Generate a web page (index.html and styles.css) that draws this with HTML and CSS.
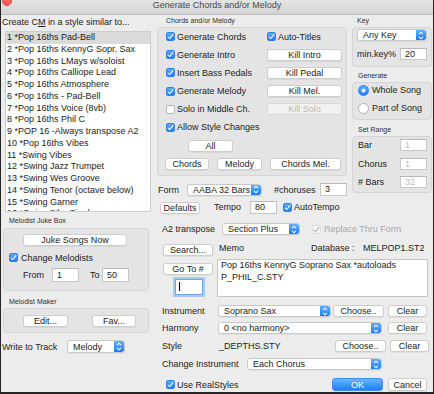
FILE: index.html
```html
<!DOCTYPE html>
<html lang="en">
<head>
    <meta charset="UTF-8">
    <title>Generate Chords and/or Melody</title>
    <link rel="stylesheet" href="styles.css">
</head>
<body>
<div class="window">
    <div class="titlebar"><span class="close"></span>Generate Chords and/or Melody</div>

    <div class="content">
        <!-- Left column: style list, juke box, maker -->
        <div class="col-left">
            <div class="caption">Create C<u>M</u> in a style similar to...</div>
            <div class="style-list">
                <div class="row sel">1 *Pop 16ths Pad-Bell</div>
                <div class="row">2 *Pop 16ths KennyG Sopr. Sax</div>
                <div class="row">3 *Pop 16ths LMays w/soloist</div>
                <div class="row">4 *Pop 16ths Calliope Lead</div>
                <div class="row">5 *Pop 16ths Atmosphere</div>
                <div class="row">6 *Pop 16ths - Pad-Bell</div>
                <div class="row">7 *Pop 16ths Voice (8vb)</div>
                <div class="row">8 *Pop 16ths Phil C</div>
                <div class="row">9 *POP 16 -Always transpose A2</div>
                <div class="row">10 *Pop 16ths Vibes</div>
                <div class="row">11 *Swing Vibes</div>
                <div class="row">12 *Swing Jazz Trumpet</div>
                <div class="row">13 *Swing Wes Groove</div>
                <div class="row">14 *Swing Tenor (octave below)</div>
                <div class="row">15 *Swing Garner</div>
                <div class="row">16 *Swing 8ths Singles</div>
            </div>

            <div class="box-label jb-label">Melodist Juke Box</div>
            <div class="box juke">
                <button class="btn juke-btn">Juke Songs Now</button>
                <div class="check change-row"><span class="cb on"></span>Change Melodists</div>
                <div class="range-row">
                    <span class="from-lbl">From</span>
                    <span class="field f27">1</span>
                    <span class="to-lbl">To</span>
                    <span class="field f27">50</span>
                </div>
            </div>

            <div class="box-label mm-label">Melodist Maker</div>
            <div class="box maker">
                <button class="btn edit-btn">Edit...</button>
                <button class="btn fav-btn">Fav...</button>
            </div>

            <div class="write-row">
                <span class="write-lbl">Write to Track</span>
                <div class="popup pop-track">
                    <span class="popup-text">Melody</span>
                    <span class="stepper"><svg width="8" height="11" viewBox="0 0 8 11"><path d="M2 4.2 L4 2.2 L6 4.2 M2 6.8 L4 8.8 L6 6.8" fill="none" stroke="#fff" stroke-width="1.1"/></svg></span>
                </div>
            </div>
        </div>

        <!-- Right side -->
        <div class="col-right">
            <div class="top">
                <div class="col-mid">
                    <div class="box-label cm-label">Chords and/or Melody</div>
                    <div class="box cm-box">
                        <div class="opts">
                            <div class="check"><span class="cb on"></span>Generate Chords</div>
                            <div class="check"><span class="cb on"></span>Auto-Titles</div>
                            <div class="check"><span class="cb on"></span>Generate Intro</div>
                            <button class="btn kill-btn">Kill Intro</button>
                            <div class="check"><span class="cb on"></span>Insert Bass Pedals</div>
                            <button class="btn kill-btn">Kill Pedal</button>
                            <div class="check"><span class="cb on"></span>Generate Melody</div>
                            <button class="btn kill-btn">Kill Mel.</button>
                            <div class="check"><span class="cb"></span>Solo in Middle Ch.</div>
                            <button class="btn kill-btn disabled">Kill Solo</button>
                            <div class="check"><span class="cb on"></span>Allow Style Changes</div>
                        </div>
                        <button class="btn all-btn">All</button>
                        <div class="trio">
                            <button class="btn chords-btn">Chords</button>
                            <button class="btn melody-btn">Melody</button>
                            <button class="btn chmel-btn">Chords Mel.</button>
                        </div>
                    </div>
                    <div class="form-row">
                        <span class="form-lbl">Form</span>
                        <div class="popup pop-form">
                            <span class="popup-text">AABA 32 Bars</span>
                            <span class="stepper"><svg width="8" height="11" viewBox="0 0 8 11"><path d="M2 4.2 L4 2.2 L6 4.2 M2 6.8 L4 8.8 L6 6.8" fill="none" stroke="#fff" stroke-width="1.1"/></svg></span>
                        </div>
                        <span class="chor-lbl">#choruses</span>
                        <span class="field f27 h13">3</span>
                    </div>
                </div>

                <div class="col-key">
                    <div class="box-label key-lbl">Key</div>
                    <div class="box key-box">
                        <div class="popup pop-key">
                            <span class="popup-text">Any Key</span>
                            <span class="stepper"><svg width="8" height="11" viewBox="0 0 8 11"><path d="M2 4.2 L4 2.2 L6 4.2 M2 6.8 L4 8.8 L6 6.8" fill="none" stroke="#fff" stroke-width="1.1"/></svg></span>
                        </div>
                        <div class="minkey-row">
                            <span class="minkey-lbl">min.key%</span>
                            <span class="field f27 h12">20</span>
                        </div>
                    </div>

                    <div class="box-label gen-lbl">Generate</div>
                    <div class="box gen-box">
                        <div class="radio-row"><span class="radio on"></span>Whole Song</div>
                        <div class="radio-row"><span class="radio"></span>Part of Song</div>
                    </div>

                    <div class="box-label range-lbl">Set Range</div>
                    <div class="box range-box">
                        <div class="rng-row"><span class="rng-lbl">Bar</span><span class="field f27 h12 dim">1</span></div>
                        <div class="rng-row"><span class="rng-lbl">Chorus</span><span class="field f27 h12 dim">1</span></div>
                        <div class="rng-row"><span class="rng-lbl"># Bars</span><span class="field f27 h12 dim">32</span></div>
                    </div>
                </div>
            </div>

            <div class="tempo-row">
                <button class="btn defaults-btn">Defaults</button>
                <span class="tempo-lbl">Tempo</span>
                <span class="field f27 h13">80</span>
                <div class="check auto-tempo"><span class="cb on"></span>AutoTempo</div>
            </div>

            <div class="a2-row">
                <span class="a2-lbl">A2 transpose</span>
                <div class="popup pop-a2">
                    <span class="popup-text">Section Plus</span>
                    <span class="stepper"><svg width="8" height="11" viewBox="0 0 8 11"><path d="M2 4.2 L4 2.2 L6 4.2 M2 6.8 L4 8.8 L6 6.8" fill="none" stroke="#fff" stroke-width="1.1"/></svg></span>
                </div>
                <div class="check replace"><span class="cb dis"></span>Replace Thru Form</div>
            </div>

            <div class="memo-area">
                <div class="memo-left">
                    <button class="btn search-btn">Search...</button>
                    <button class="btn goto-btn">Go To #</button>
                    <div class="goto-field"><span class="caret"></span></div>
                </div>
                <div class="memo-right">
                    <div class="memo-head">
                        <span class="memo-lbl">Memo</span>
                        <span class="db-lbl">Database :</span>
                        <span class="db-name">MELPOP1.ST2</span>
                    </div>
                    <div class="memo-text">Pop 16ths KennyG Soprano Sax *autoloads<br>P_PHIL_C.STY</div>
                </div>
            </div>

            <div class="opt-row inst-row">
                <span class="opt-lbl">Instrument</span>
                <div class="popup pop-inst">
                    <span class="popup-text">Soprano Sax</span>
                    <span class="stepper"><svg width="8" height="11" viewBox="0 0 8 11"><path d="M2 4.2 L4 2.2 L6 4.2 M2 6.8 L4 8.8 L6 6.8" fill="none" stroke="#fff" stroke-width="1.1"/></svg></span>
                </div>
                <button class="btn choose-btn">Choose..</button>
                <button class="btn clear-btn">Clear</button>
            </div>

            <div class="opt-row harm-row">
                <span class="opt-lbl">Harmony</span>
                <div class="popup pop-harm">
                    <span class="popup-text">0 &lt;no harmony&gt;</span>
                    <span class="stepper"><svg width="8" height="11" viewBox="0 0 8 11"><path d="M2 4.2 L4 2.2 L6 4.2 M2 6.8 L4 8.8 L6 6.8" fill="none" stroke="#fff" stroke-width="1.1"/></svg></span>
                </div>
                <button class="btn clear-btn wide-gap">Clear</button>
            </div>

            <div class="opt-row style-row">
                <span class="opt-lbl style-lbl">Style</span>
                <span class="style-name">_DEPTHS.STY</span>
                <button class="btn choose-btn">Choose..</button>
                <button class="btn clear-btn">Clear</button>
            </div>

            <div class="opt-row chg-row">
                <span class="chg-lbl">Change Instrument</span>
                <div class="popup pop-chg">
                    <span class="popup-text">Each Chorus</span>
                    <span class="stepper"><svg width="8" height="11" viewBox="0 0 8 11"><path d="M2 4.2 L4 2.2 L6 4.2 M2 6.8 L4 8.8 L6 6.8" fill="none" stroke="#fff" stroke-width="1.1"/></svg></span>
                </div>
            </div>

            <div class="bottom-row">
                <div class="check"><span class="cb on"></span>Use RealStyles</div>
                <button class="btn ok-btn">OK</button>
                <button class="btn cancel-btn">Cancel</button>
            </div>
        </div>
    </div>
</div>
</body>
</html>
```

FILE: styles.css
```css
* {
    margin: 0;
    padding: 0;
    box-sizing: border-box;
}

body {
    font-family: "Liberation Sans", Arial, sans-serif;
    font-size: 9px;
    color: #222;
    background: #ececec;
}

/* Window frame */
.window {
    width: 434px;
    height: 394px;
    background: #ececec;
    border: 1px solid #262626;
    border-top: none;
    border-bottom-width: 2px;
    overflow: hidden;
}

.titlebar {
    position: relative;
    height: 15px;
    line-height: 11px;
    text-align: center;
    color: #4a4a4a;
    background: linear-gradient(#e4e4e4, #d3d3d3);
    border-bottom: 1px solid #bfbfbf;
}

.close {
    position: absolute;
    left: 1px;
    top: -4px;
    width: 10px;
    height: 10px;
    border-radius: 50%;
    background: #fc605c;
    border: 1px solid #e0473f;
}

.content {
    display: flex;
}

/* Shared controls */
.btn {
    display: block;
    font: inherit;
    color: #222;
    background: #fff;
    border: 1px solid #cdcdcd;
    border-radius: 3px;
    box-shadow: 0 1px 0 rgba(0, 0, 0, 0.05);
    outline: none;
    height: 12px;
    line-height: 10px;
    text-align: center;
    white-space: nowrap;
    flex: none;
}

.btn.disabled {
    background: #f1f1f1;
    color: #b8b8b8;
    border-color: #dadada;
    box-shadow: none;
}

.field {
    display: block;
    flex: none;
    height: 14px;
    line-height: 12px;
    padding-left: 4px;
    background: #fff;
    border: 1px solid #c6c6c6;
    border-top-color: #b8b8b8;
}

.f27 { width: 27px; }
.h12 { height: 12px; line-height: 10px; }
.h13 { height: 13px; line-height: 11px; }
.dim { color: #bdbdbd; }

.box {
    background: #e4e4e4;
    border: 1px solid #d5d5d5;
    border-radius: 4px;
}

.box-label {
    font-size: 7px;
    color: #2e2e2e;
    height: 10px;
    line-height: 10px;
}

.check {
    display: flex;
    align-items: center;
    white-space: nowrap;
}

.cb {
    position: relative;
    flex: none;
    width: 9px;
    height: 9px;
    margin-right: 2px;
    background: #fff;
    border: 1px solid #b3b3b3;
    border-radius: 2px;
}

.cb.on {
    background: linear-gradient(#5fabfc, #1b7ff6);
    border-color: #2c82ea;
}

.cb.on::after,
.cb.dis::after {
    content: '';
    position: absolute;
    left: 2px;
    top: 0;
    width: 2px;
    height: 5px;
    border: solid #fff;
    border-width: 0 1.5px 1.5px 0;
    transform: rotate(40deg);
}

.cb.dis {
    background: #f4f4f4;
    border-color: #dcdcdc;
}

.cb.dis::after {
    border-color: #b3b3b3;
}

.radio {
    flex: none;
    width: 11px;
    height: 11px;
    border-radius: 50%;
    background: #fff;
    border: 1px solid #b3b3b3;
}

.radio.on {
    background: radial-gradient(circle, #fff 0 1.8px, transparent 2.3px), linear-gradient(#5fabfc, #1b7ff6);
    border-color: #2c82ea;
}

.popup {
    display: flex;
    align-items: center;
    flex: none;
    background: #fff;
    border: 1px solid #c9c9c9;
    border-radius: 3px;
    overflow: hidden;
    box-shadow: 0 1px 0 rgba(0, 0, 0, 0.05);
}

.popup-text {
    flex: 1;
    padding-left: 5px;
    white-space: nowrap;
    overflow: hidden;
}

.stepper {
    align-self: stretch;
    width: 10px;
    display: flex;
    align-items: center;
    justify-content: center;
    background: linear-gradient(#66aefb, #1a7ef5);
    border-radius: 0 2px 2px 0;
}

/* Left column */
.col-left {
    width: 151px;
    flex: none;
}

.caption {
    height: 12px;
    line-height: 12px;
    margin-top: 1px;
    padding-left: 1px;
    white-space: nowrap;
}

.style-list {
    margin: 3px 0 0 4px;
    width: 146px;
    height: 181px;
    background: #fff;
    border: 1px solid #cdcdcd;
    overflow: hidden;
}

.row {
    height: 11.75px;
    line-height: 11.75px;
    padding-left: 1px;
    white-space: nowrap;
}

.row.sel {
    background: #dadada;
}

.jb-label {
    margin-top: 4px;
    padding-left: 8px;
}

.juke {
    margin: 2px 0 0 2px;
    width: 146px;
    height: 63px;
}

.juke-btn {
    margin: 5px 0 0 19px;
    width: 104px;
}

.change-row {
    height: 11px;
    margin-top: 6px;
    padding-left: 5px;
}

.change-row .cb {
    margin-right: 3px;
}

.range-row {
    display: flex;
    align-items: center;
    height: 14px;
    margin-top: 5px;
    padding-left: 19px;
}

.from-lbl { width: 29px; }
.to-lbl { width: 12px; margin-left: 11px; }

.mm-label {
    margin-top: 6px;
    padding-left: 8px;
}

.maker {
    display: flex;
    margin: 1px 0 0 2px;
    width: 146px;
    height: 25px;
}

.edit-btn { margin: 6px 0 0 19px; width: 45px; }
.fav-btn { margin: 6px 0 0 24px; width: 44px; }

.write-row {
    display: flex;
    align-items: center;
    margin-top: 7px;
    height: 13px;
    padding-left: 1px;
}

.write-lbl { width: 65px; white-space: nowrap; }
.pop-track { width: 58px; height: 13px; }

/* Right side */
.col-right {
    width: 281px;
    flex: none;
}

.top {
    display: flex;
}

.col-mid {
    width: 200px;
    flex: none;
}

.cm-label {
    margin-top: 1px;
    padding-left: 14px;
}

.cm-box {
    margin: 1px 0 0 5px;
    width: 190px;
    height: 149px;
}

.opts {
    display: grid;
    grid-template-columns: 101px 75px;
    grid-auto-rows: 13px;
    row-gap: 5.2px;
    align-items: center;
    padding: 2px 0 0 8px;
}

.kill-btn { width: 75px; }

.all-btn {
    margin: 6px 0 0 30px;
    width: 45px;
}

.trio {
    display: flex;
    margin-top: 6px;
    padding-left: 7px;
}

.chords-btn { width: 44px; }
.melody-btn { width: 45px; margin-left: 8px; }
.chmel-btn { width: 71px; margin-left: 8px; }

.form-row {
    display: flex;
    align-items: center;
    margin-top: 7px;
    height: 13px;
    padding-left: 6px;
}

.form-lbl { width: 29px; }
.pop-form { width: 75px; height: 12px; }
.chor-lbl { width: 46px; margin-left: 12px; }

.col-key {
    width: 80px;
    flex: none;
}

.key-lbl {
    margin-top: 1px;
    padding-left: 5px;
}

.key-box {
    margin-top: 1px;
    height: 40px;
}

.pop-key {
    margin: 1px 0 0 4px;
    width: 70px;
    height: 12px;
}

.minkey-row {
    display: flex;
    align-items: center;
    margin-top: 7px;
    height: 12px;
    padding-left: 4px;
}

.minkey-lbl { width: 43px; }

.gen-lbl {
    margin-top: 4px;
    padding-left: 6px;
}

.gen-box {
    margin-top: 1px;
    height: 38px;
    padding-top: 1px;
    display: flex;
    flex-direction: column;
    gap: 6px;
}

.radio-row {
    display: flex;
    align-items: center;
    height: 12px;
    padding-left: 5px;
}

.radio-row .radio { margin-right: 3px; }

.range-lbl {
    margin-top: 5px;
    padding-left: 6px;
}

.range-box {
    margin-top: 1px;
    height: 57px;
    padding-top: 2px;
    display: flex;
    flex-direction: column;
    gap: 6.5px;
}

.rng-row {
    display: flex;
    align-items: center;
    height: 12px;
    padding-left: 5px;
}

.rng-lbl { width: 42px; }

.tempo-row {
    display: flex;
    align-items: center;
    margin-top: 4px;
    height: 14px;
    padding-left: 8px;
}

.defaults-btn { width: 40px; height: 12px; margin-top: 2px; }
.tempo-lbl { width: 36px; margin-left: 14px; }
.auto-tempo { margin-left: 6px; }

.a2-row {
    display: flex;
    align-items: center;
    margin-top: 8px;
    height: 14px;
    padding-left: 10px;
}

.a2-lbl { width: 60px; white-space: nowrap; }
.pop-a2 { width: 78px; height: 12px; }

.replace {
    margin-left: 12px;
    color: #a9a9a9;
}

.replace .cb { margin-right: 3px; }

.memo-area {
    display: flex;
    margin-top: 8px;
}

.memo-left {
    width: 65px;
    flex: none;
}

.search-btn { margin-left: 11px; width: 50px; }
.goto-btn { margin: 7px 0 0 11px; width: 50px; }

.goto-field {
    margin: 4px 0 0 23px;
    width: 28px;
    height: 16px;
    background: #fff;
    border: 1px solid #6ea5e6;
    box-shadow: 0 0 0 2px #a9caf0;
}

.caret {
    display: block;
    width: 1px;
    height: 9px;
    margin: 2px 0 0 3px;
    background: #000;
}

.memo-right {
    width: 216px;
    flex: none;
}

.memo-head {
    display: flex;
    height: 9px;
    line-height: 9px;
    padding-left: 2px;
    white-space: nowrap;
}

.memo-lbl { width: 92px; }
.db-lbl { width: 52px; }

.memo-text {
    margin-top: 6px;
    width: 211px;
    height: 38px;
    padding: 0 3px;
    line-height: 11.5px;
    background: #fff;
    border: 1px solid #c6c6c6;
    white-space: nowrap;
}

.opt-row {
    display: flex;
    align-items: center;
    height: 12px;
    padding-left: 10px;
}

.opt-lbl { width: 56px; }
.inst-row { margin-top: 8px; }
.harm-row { margin-top: 5px; }
.style-row { margin-top: 6px; }
.chg-row { margin-top: 6px; }

.pop-inst { width: 113px; height: 12px; }
.pop-harm { width: 164px; height: 12px; }
.pop-chg { width: 135px; height: 12px; }

.choose-btn { width: 51px; margin-left: 2px; }
.clear-btn { width: 39px; margin-left: 4px; }
.clear-btn.wide-gap { margin-left: 6px; }

.style-lbl { width: 57px; }
.style-name { width: 114px; }
.chg-lbl { width: 85px; white-space: nowrap; }

.bottom-row {
    display: flex;
    align-items: center;
    margin-top: 8px;
    height: 13px;
    padding: 0 6px 0 14px;
}

.ok-btn {
    margin-left: auto;
    width: 51px;
    height: 13px;
    color: #fff;
    background: linear-gradient(#6cb3fb, #1880f8);
    border-color: #3f8ef0;
}

.cancel-btn {
    margin-left: 5px;
    width: 39px;
    height: 13px;
}
```
